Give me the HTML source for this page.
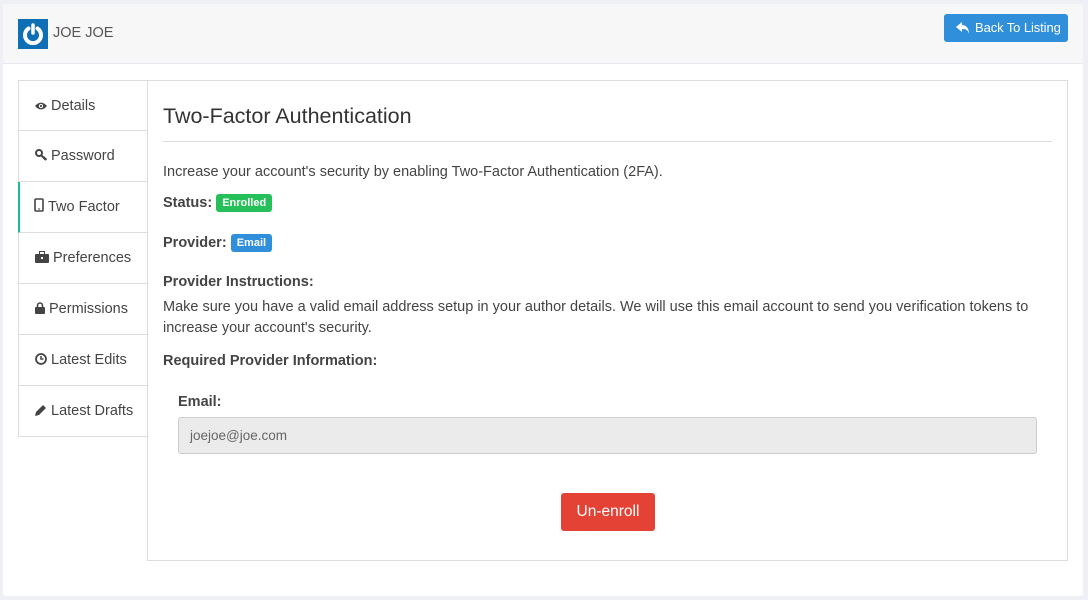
<!DOCTYPE html>
<html><head><meta charset="utf-8"><style>
*{box-sizing:border-box;margin:0;padding:0}
body{width:1088px;height:600px;background:#eef0f5;font-family:"Liberation Sans",sans-serif;color:#333;position:relative;overflow:hidden;font-size:14.5px}
.card{position:absolute;left:3px;top:4px;width:1080px;height:592px;background:#fff;border-radius:3px}
.hdr{position:absolute;left:0;top:0;width:1080px;height:60px;background:#f7f7f8;border-bottom:1px solid #e6e9f0;border-radius:3px 3px 0 0}
.logo{position:absolute;left:15px;top:15px;width:30px;height:30px;background:#0f6fb5}
.name{position:absolute;left:50px;top:21px;font-size:14.5px;color:#555}
.btn{position:absolute;left:941px;top:10px;width:124px;height:28px;background:#2f8fdb;border-radius:3px;color:#fff;font-size:13px;line-height:28px;padding-left:31px;letter-spacing:-0.1px}
.tabs{position:absolute;left:18px;top:80px;width:130px}
.tab{height:51px;border:1px solid #ddd;border-top:none;background:#fff;font-size:14.5px;color:#444;line-height:50px;padding-left:16px;white-space:nowrap}
.tab:first-child{border-top:1px solid #ddd}
.tab.act{border-left:2px solid #1abc9c;border-right:none;padding-left:14px}
.ic{display:inline-block;width:12px;margin-right:4px;vertical-align:-1px}
.panel{position:absolute;left:147px;top:80px;width:921px;height:481px;border:1px solid #ddd;background:#fff}
h2{position:absolute;left:15px;top:23px;font-size:21.5px;font-weight:normal;color:#333}
.hr{position:absolute;left:15px;right:15px;top:60px;border-top:1px solid #ddd}
.t{position:absolute;left:15px;font-size:14.5px;white-space:nowrap}
b{font-weight:bold;color:#444}
.lbl{display:inline-block;color:#fff;font-size:11px;font-weight:bold;padding:3px 6px;border-radius:3px;vertical-align:1px}
.inp{position:absolute;left:30px;top:336px;width:859px;height:37px;background:#ebebeb;border:1px solid #ccc;border-radius:3px;color:#666;font-size:13.5px;line-height:35px;padding-left:11px}
.un{position:absolute;left:413px;top:412px;width:94px;height:38px;background:#e34234;border-radius:3px;color:#fff;font-size:15.5px;line-height:38px;text-align:center}
</style></head><body>
<div class="card">
<div class="hdr">
<div class="logo"><svg width="30" height="30"><path d="M10.5 9.5 A8 8 0 1 0 19.5 9.5" fill="none" stroke="#fff" stroke-width="4" stroke-linecap="round"/><line x1="15" y1="6" x2="15" y2="14" stroke="#fff" stroke-width="3.5" stroke-linecap="round"/></svg></div>
<div class="name">JOE JOE</div>
<div class="btn"><svg style="position:absolute;left:12px;top:8px" width="14" height="12"><path d="M6 0 L0 5 L6 10 V7 C10 7 12 8 13 12 C13 6 10 3 6 3Z" fill="#fff"/></svg>Back To Listing</div>
</div>
</div>
<div class="tabs">
<div class="tab"><svg class="ic" viewBox="0 0 14 10" height="10"><path d="M0 5 Q7 -3 14 5 Q7 13 0 5Z" fill="#444"/><circle cx="7" cy="5" r="2.5" fill="#fff"/><circle cx="7" cy="5" r="1.3" fill="#444"/></svg>Details</div>
<div class="tab"><svg class="ic" viewBox="0 0 12 12" height="12"><circle cx="4" cy="4" r="3" fill="none" stroke="#444" stroke-width="2"/><path d="M6 6 L11 11 M9 9 L10 8 M10.5 10.5 L11.5 9.5" stroke="#444" stroke-width="2"/></svg>Password</div>
<div class="tab act"><svg class="ic" viewBox="0 0 10 14" height="14" style="width:10px"><rect x="1" y="1" width="8" height="12" rx="1" fill="none" stroke="#444" stroke-width="1.6"/><line x1="4" y1="11" x2="6" y2="11" stroke="#444"/></svg>Two Factor</div>
<div class="tab"><svg class="ic" viewBox="0 0 14 12" height="12" style="width:14px"><rect x="0" y="3" width="14" height="9" rx="1" fill="#444"/><rect x="4.5" y="0.5" width="5" height="3" fill="none" stroke="#444"/><rect x="6" y="6" width="2" height="2" fill="#fff"/></svg>Preferences</div>
<div class="tab"><svg class="ic" viewBox="0 0 10 12" height="12" style="width:10px"><rect x="0" y="5" width="10" height="7" rx="1" fill="#444"/><path d="M2.5 5 V3.5 A2.5 2.5 0 0 1 7.5 3.5 V5" fill="none" stroke="#444" stroke-width="1.6"/></svg>Permissions</div>
<div class="tab"><svg class="ic" viewBox="0 0 12 12" height="12"><circle cx="6" cy="6" r="5" fill="none" stroke="#444" stroke-width="1.8"/><path d="M6 3 V6 H8.5" fill="none" stroke="#444" stroke-width="1.5"/></svg>Latest Edits</div>
<div class="tab"><svg class="ic" viewBox="0 0 12 12" height="12"><path d="M0 12 L1 8 L8 1 L11 4 L4 11Z" fill="#444"/></svg>Latest Drafts</div>
</div>
<div class="panel">
<h2>Two-Factor Authentication</h2>
<div class="hr"></div>
<div class="t" style="top:83px;color:#444">Increase your account's security by enabling Two-Factor Authentication (2FA).</div>
<div class="t" style="top:113px"><b>Status:</b> <span class="lbl" style="background:#26c05a">Enrolled</span></div>
<div class="t" style="top:153px"><b>Provider:</b> <span class="lbl" style="background:#2f8fdb">Email</span></div>
<div class="t" style="top:193px"><b>Provider Instructions:</b></div>
<div class="t" style="top:216px;line-height:21px;color:#444">Make sure you have a valid email address setup in your author details. We will use this email account to send you verification tokens to<br>increase your account's security.</div>
<div class="t" style="top:272px"><b>Required Provider Information:</b></div>
<div class="t" style="top:313px;left:30px"><b>Email:</b></div>
<div class="inp">joejoe@joe.com</div>
<div class="un">Un-enroll</div>
</div>
</body></html>
